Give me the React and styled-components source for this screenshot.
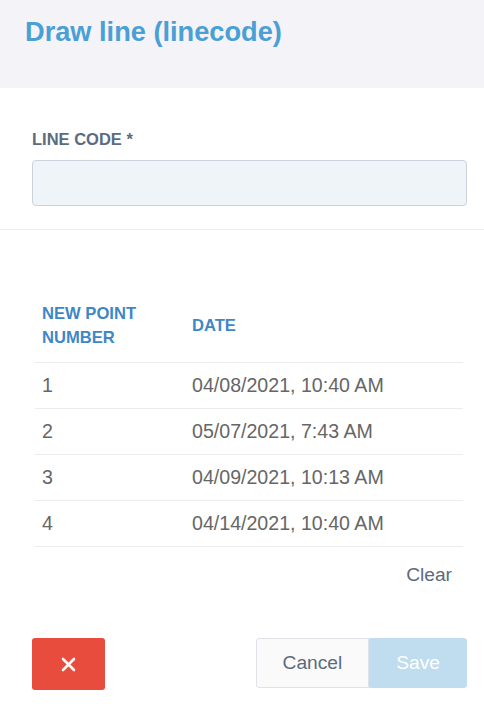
import React from "react";
import styled, { createGlobalStyle } from "styled-components";

const GlobalStyle = createGlobalStyle`
  html, body {
    margin: 0;
    padding: 0;
    background: #fff;
  }
  body {
    font-family: "Liberation Sans", Arial, sans-serif;
  }
  * {
    box-sizing: border-box;
  }
`;

const Panel = styled.div`
  width: 484px;
  min-height: 721px;
  background: #fff;
`;

const Header = styled.div`
  height: 88px;
  padding: 16px 25px 0;
  background: #f3f3f8;
`;

const Title = styled.h1`
  margin: 0;
  font-size: 27.2px;
  line-height: 32px;
  font-weight: 700;
  color: #4a9fd5;
`;

const FormSection = styled.div`
  padding: 41px 17px 23px 32px;
  border-bottom: 1px solid #ececf0;
`;

const Label = styled.label`
  display: block;
  font-size: 16.5px;
  line-height: 20px;
  font-weight: 700;
  color: #5b6b80;
  margin-bottom: 11px;
`;

const Input = styled.input`
  display: block;
  width: 100%;
  height: 46px;
  padding: 0 12px;
  border: 1px solid #cad3dc;
  border-radius: 4px;
  background: #eff4f8;
  font-family: inherit;
  font-size: 19px;
  outline: none;
`;

const TableSection = styled.div`
  padding: 57px 21px 0 35px;
`;

const Table = styled.table`
  width: 100%;
  border-collapse: collapse;
`;

const HeadCell = styled.th`
  width: ${({ $w }) => $w || "auto"};
  padding: 15px 7px 12px;
  text-align: left;
  vertical-align: middle;
  font-size: 16.6px;
  line-height: 24px;
  font-weight: 700;
  color: #3e87c6;
  border-bottom: 1px solid #ececf0;
`;

const Cell = styled.td`
  padding: 9px 7px;
  font-size: 19.6px;
  line-height: 27px;
  color: #666;
  border-bottom: 1px solid #ececf0;
`;

const ClearRow = styled.div`
  display: flex;
  justify-content: flex-end;
  margin-top: 14px;
  padding-right: 11px;
`;

const TextButton = styled.button`
  border: none;
  background: none;
  padding: 0;
  font-family: inherit;
  font-size: 19.2px;
  line-height: 27px;
  color: #5b6b7e;
  cursor: pointer;
`;

const Footer = styled.div`
  display: flex;
  justify-content: space-between;
  align-items: flex-start;
  padding: 50px 17px 0 32px;
`;

const DeleteButton = styled.button`
  display: flex;
  align-items: center;
  justify-content: center;
  width: 73px;
  height: 52px;
  border: none;
  border-radius: 3px;
  background: #e74c3c;
  cursor: pointer;
`;

const Group = styled.div`
  display: flex;
`;

const Button = styled.button`
  height: 50px;
  padding: 0 26px;
  font-family: inherit;
  font-size: 19.2px;
  border: 1px solid ${({ $primary }) => ($primary ? "#c0dcef" : "#dfe3e8")};
  background: ${({ $primary }) => ($primary ? "#c0dcef" : "#fafafa")};
  color: ${({ $primary }) => ($primary ? "#fff" : "#5b6b7e")};
  border-radius: ${({ $primary }) => ($primary ? "0 3px 3px 0" : "3px 0 0 3px")};
  cursor: pointer;
`;

const rows = [
  ["1", "04/08/2021, 10:40 AM"],
  ["2", "05/07/2021, 7:43 AM"],
  ["3", "04/09/2021, 10:13 AM"],
  ["4", "04/14/2021, 10:40 AM"],
];

const App = () => {
  return (
    <Panel>
      <GlobalStyle />
      <Header>
        <Title>Draw line (linecode)</Title>
      </Header>
      <FormSection>
        <Label>LINE CODE *</Label>
        <Input />
      </FormSection>
      <TableSection>
        <Table>
          <thead>
            <tr>
              <HeadCell $w="150px">
                NEW POINT
                <br />
                NUMBER
              </HeadCell>
              <HeadCell>DATE</HeadCell>
            </tr>
          </thead>
          <tbody>
            {rows.map(([num, date]) => (
              <tr key={num}>
                <Cell>{num}</Cell>
                <Cell>{date}</Cell>
              </tr>
            ))}
          </tbody>
        </Table>
        <ClearRow>
          <TextButton>Clear</TextButton>
        </ClearRow>
      </TableSection>
      <Footer>
        <DeleteButton>
          <svg width="15" height="15" viewBox="0 0 15 15">
            <path
              d="M2 2 L13 13 M13 2 L2 13"
              stroke="#fff"
              strokeWidth="2.6"
              strokeLinecap="round"
            />
          </svg>
        </DeleteButton>
        <Group>
          <Button>Cancel</Button>
          <Button $primary>Save</Button>
        </Group>
      </Footer>
    </Panel>
  );
};

export default App;
